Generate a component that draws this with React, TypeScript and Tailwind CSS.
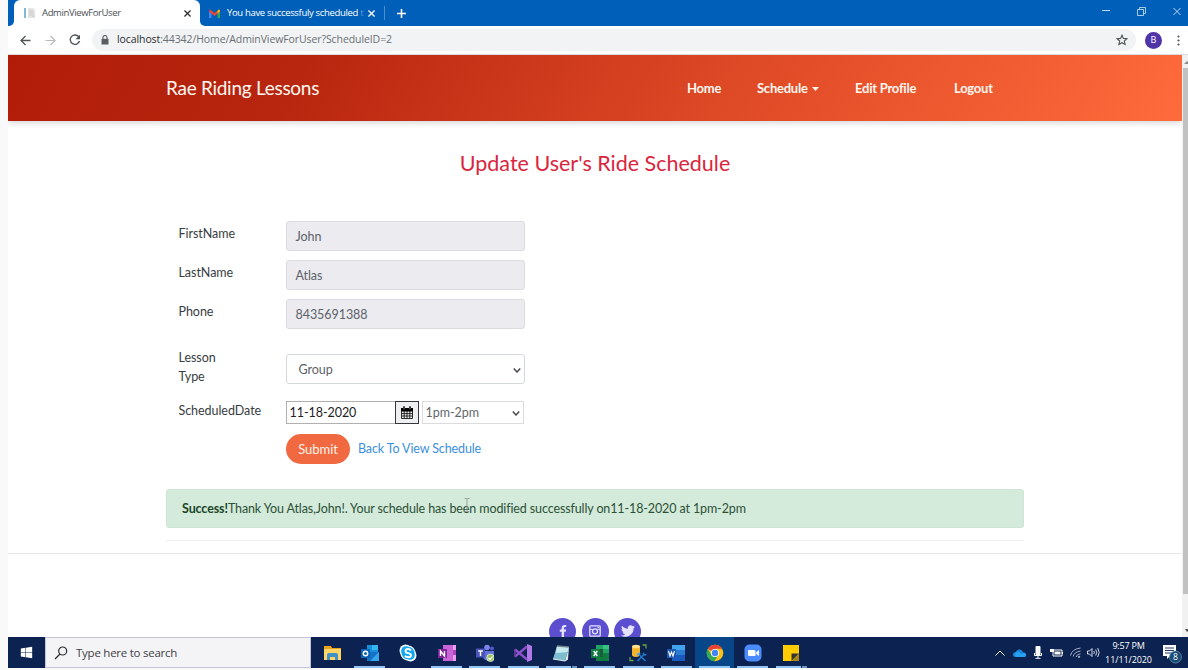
import React from "react";
import { FaFacebookF, FaTwitter, FaWindows } from "react-icons/fa";

const UI = "font-['Open_Sans','Noto_Sans',sans-serif]";

function TabBar() {
  return (
    <div className={`flex h-[26px] bg-[#005fb8] text-[9.5px] ${UI}`}>
      <div className="flex h-[26px] w-[6px] shrink-0 bg-white">
        <div className="w-full rounded-br-[5px] bg-[#005fb8]" />
      </div>
      <div className="flex h-[26px] w-[186px] shrink-0 items-center rounded-t-[6px] bg-white text-[#4b5056]">
        <svg className="ml-[9px] h-[12px] w-[13px] shrink-0" viewBox="0 0 13 12">
          <path d="M1 1h2v10H1z" fill="#82b9d6" />
          <path d="M5 1h5l2 2v8H5z" fill="#e4e4e4" />
          <path d="M6 4h4M6 6h5M6 8h3M9 9h3" stroke="#c2c2c2" strokeWidth=".8" />
        </svg>
        <span className="ml-[6px] w-[142px] tracking-[-0.38px]">AdminViewForUser</span>
        <Cross className="h-[7px] w-[7px] text-[#303030]" />
      </div>
      <div className="flex h-[26px] w-[6px] shrink-0 bg-white">
        <div className="w-full rounded-bl-[5px] bg-[#005fb8]" />
      </div>
      <div className="flex items-center text-white">
        <svg className="ml-[3px] h-[9px] w-[11px]" viewBox="0 0 11 9">
          <path d="M0 1.500V9h2.500V3.500z" fill="#4285f4" />
          <path d="M8.500 3.500V9H11V1.500z" fill="#34a853" />
          <path d="M0 1.500L1 .5l4.500 3.500L10 .5l1 1v1L5.500 7 0 2.500z" fill="#ea4335" />
          <path d="M8.500 1.700L10 .5l1 1v1L8.500 4.500z" fill="#fbbc04" />
        </svg>
        <span className="ml-[7px] w-[134px] whitespace-nowrap tracking-[-0.33px]">
          You have successfuly scheduled <span className="text-[#5b9bd5]">t</span>
        </span>
        <Cross className="ml-[7px] h-[7px] w-[7px]" />
        <div className="ml-[9px] h-[14px] w-px bg-[#4b8fd0]" />
        <svg className="ml-[12px] h-[9px] w-[9px]" viewBox="0 0 9 9">
          <path d="M4.500 0v9M0 4.500h9" stroke="white" strokeWidth="1.600" />
        </svg>
      </div>
      <div className="ml-auto flex gap-[27px] pr-[7px] pt-[7px] text-[#b9d9ee]">
        <svg className="h-[9px] w-[8px]" viewBox="0 0 8 9">
          <path d="M0 3.500h8" stroke="currentColor" />
        </svg>
        <svg className="h-[9px] w-[9px]" viewBox="0 0 9 9" fill="none" stroke="currentColor" strokeWidth=".9">
          <path d="M.5 2.500h6v6h-6zM2.500 2.500v-2h6v6h-2" />
        </svg>
        <Cross thin className="h-[9px] w-[8px]" />
      </div>
    </div>
  );
}

function Cross({ className, thin }: { className: string; thin?: boolean }) {
  return (
    <svg className={`shrink-0 ${className}`} viewBox="0 0 8 8">
      <path d="M.5.5l7 7M7.500.5l-7 7" stroke="currentColor" strokeWidth={thin ? 1 : 1.5} />
    </svg>
  );
}

function AddressBar() {
  return (
    <div className={`flex h-[29px] items-center border-b border-[#dddddf] bg-white ${UI}`}>
      <svg className="ml-[12px] h-[11px] w-[11px]" viewBox="0 0 11 11" fill="none" stroke="#50555a" strokeWidth="1.300">
        <path d="M10.500 5.500H1M5.500 1L1 5.500 5.500 10" />
      </svg>
      <svg className="ml-[14px] h-[11px] w-[11px]" viewBox="0 0 11 11" fill="none" stroke="#b8babd" strokeWidth="1.200">
        <path d="M.5 5.500H10M5.500 1L10 5.500 5.500 10" />
      </svg>
      <svg className="ml-[13px] h-[12px] w-[12px]" viewBox="0 0 12 12">
        <path d="M10 3.200A4.700 4.700 0 1 0 10.500 7" fill="none" stroke="#50555a" strokeWidth="1.400" />
        <path d="M11 .7v4.500H6.500z" fill="#50555a" />
      </svg>
      <div className="ml-[11px] flex h-[22px] w-[1044px] items-center rounded-full bg-[#f1f3f4]">
        <svg className="ml-[9px] h-[10px] w-[8px]" viewBox="0 0 8 10">
          <path d="M.5 3.800h7v5.700h-7z" fill="#5a5e62" />
          <path d="M2 4V2.500a2 2 0 0 1 4 0V4" fill="none" stroke="#5a5e62" strokeWidth="1.100" />
        </svg>
        <span className="ml-[8px] whitespace-nowrap text-[10.5px] tracking-[-0.09px] text-[#6b6f74]">
          <span className="text-[#2b2d30]">localhost</span>:44342/Home/AdminViewForUser?ScheduleID=2
        </span>
        <svg className="ml-auto mr-[8px] h-[12px] w-[12px]" viewBox="0 0 12 12">
          <path d="M6 1.200l1.400 3.200 3.500.3-2.600 2.300.8 3.500L6 8.700l-3.100 1.800.8-3.500L1.100 4.700l3.500-.3z" fill="none" stroke="#4e5357" strokeWidth="1.100" />
        </svg>
      </div>
      <div className="ml-[9px] flex h-[17px] w-[17px] items-center justify-center rounded-full bg-[#5134a8] text-[9px] text-white">B</div>
      <svg className="ml-[15px] h-[11px] w-[3px]" viewBox="0 0 3 11" fill="#505357">
        <circle cx="1.500" cy="1.500" r="1.100" />
        <circle cx="1.500" cy="5.500" r="1.100" />
        <circle cx="1.500" cy="9.500" r="1.100" />
      </svg>
    </div>
  );
}

function SiteNav() {
  return (
    <nav className="flex h-[66px] shrink-0 items-center bg-[linear-gradient(120deg,#b01c08_0%,#b8260f_25%,#e04b27_63%,#ff6b3b_100%)] pt-[1px] text-[13px] font-bold tracking-[-0.24px] text-[#fff7f0] shadow-[0_2px_6px_rgba(0,0,0,0.16)]">
      <div className="ml-[158px] w-[521px] pb-[1px] text-[19px] font-normal tracking-[-0.28px]">Rae Riding Lessons</div>
      <div className="w-[70px]">Home</div>
      <div className="flex w-[98px] items-center">
        Schedule
        <svg className="ml-[4px] h-[4px] w-[7px]" viewBox="0 0 7 4">
          <path d="M0 0h7L3.500 4z" fill="currentColor" />
        </svg>
      </div>
      <div className="w-[99px]">Edit Profile</div>
      <div>Logout</div>
    </nav>
  );
}

function Chevron() {
  return (
    <svg className="ml-auto h-[5px] w-[8px]" viewBox="0 0 8 5">
      <path d="M.8.6L4 4 7.200.6" fill="none" stroke="#48494b" strokeWidth="1.500" />
    </svg>
  );
}

function ReadonlyField({ label, value }: { label: string; value: string }) {
  return (
    <div className="flex h-[39px]">
      <div className="w-[107px] pt-[3px] leading-[19px]">{label}</div>
      <div className="flex h-[30px] w-[239px] items-center rounded-[3px] border border-[#dadce1] bg-[#ebebf0] px-[9px] pt-[2px] text-[#5d6268]">
        {value}
      </div>
    </div>
  );
}

function ScheduleForm() {
  return (
    <div className="ml-[170.5px] mt-[44px] flex flex-col text-[12.5px] tracking-[-0.05px] text-[#383d42]">
      <ReadonlyField label="FirstName" value="John" />
      <ReadonlyField label="LastName" value="Atlas" />
      <ReadonlyField label="Phone" value="8435691388" />
      <div className="mt-[16px] flex h-[47px]">
        <div className="-mt-[6px] w-[107px] leading-[19px]">
          Lesson
          <br />
          Type
        </div>
        <div className="flex h-[30px] w-[239px] items-center rounded-[3px] border border-[#d4d9df] pl-[12px] pr-[3px] pt-[2px] text-[#5d6268]">
          Group
          <Chevron />
        </div>
      </div>
      <div className="flex h-[33px]">
        <div className="w-[107px] leading-[19px]">ScheduledDate</div>
        <div className="flex h-[23px] w-[109px] items-center border border-r-0 border-[#b0b0b0] pl-[3px] pt-[2px] text-[#202225]">11-18-2020</div>
        <div className="flex h-[23px] w-[24px] items-center justify-center border border-[#34383c] bg-[#efeff1] text-black">
          <svg className="h-[13px] w-[12px]" viewBox="0 0 12 13">
            <path d="M.5 2.500h11v10H.5zM.5 5.200h11M.5 7.600h11M.5 10h11M3.200 5v7.500M6 5v7.500M8.800 5v7.500" fill="none" stroke="currentColor" strokeWidth=".8" />
            <path d="M0 2h12v3H0zM2 .5h2v3H2zM8 .5h2v3H8z" fill="currentColor" />
            <path d="M3 1.300v1.900M9 1.300v1.900" stroke="white" strokeWidth=".6" />
          </svg>
        </div>
        <div className="ml-[3px] flex h-[23px] w-[102px] items-center border border-[#dcdcdc] pl-[3px] pr-[3px] pt-[2px] text-[#63676b]">
          1pm-2pm
          <Chevron />
        </div>
      </div>
      <div className="ml-[107px] flex">
        <div className="ml-[0.5px] flex h-[30px] w-[64px] items-center justify-center rounded-full bg-[#f06940] pt-[2px] text-[13px] text-[#fff3ea]">Submit</div>
        <div className="ml-[8px] pt-[5px] leading-[19px] tracking-[-0.12px] text-[#3b8fe0]">Back To View Schedule</div>
      </div>
    </div>
  );
}

function SocialIcon({ children }: { children: React.ReactNode }) {
  return (
    <div className="flex h-[27px] w-[27px] items-center justify-center rounded-full bg-[#5b4fcf] text-[12px] text-[#e4e2ff]">
      {children}
    </div>
  );
}

function Page() {
  return (
    <div className="flex h-[582px] bg-white font-['Lato',sans-serif]">
      <div className="flex w-[1174px] flex-col overflow-hidden">
        <SiteNav />
        <h1 className="mt-[28px] text-center text-[21.5px] leading-[28px] text-[#d9263e]">Update User's Ride Schedule</h1>
        <ScheduleForm />
        <div className="relative ml-[158px] mt-[25px] flex h-[39px] w-[858px] shrink-0 items-center rounded-[3px] border border-[#cde6d4] bg-[#d4eadb] pl-[15px] pt-[2px] text-[12.5px] tracking-[-0.115px] text-[#2b5136]">
          <b className="text-[#194526]">Success!</b>
          <span>Thank You Atlas,John!. Your schedule has been modified successfully on11-18-2020 at 1pm-2pm</span>
          <svg className="absolute left-[297px] top-[8px] h-[14px] w-[6px]" viewBox="0 0 6 14">
            <path d="M.5.5h2l.5.500.5-.5h2M3 1v12M.5 13.500h2l.5-.5.5.5h2" fill="none" stroke="#8b8f8c" strokeWidth=".8" />
          </svg>
        </div>
        <div className="ml-[158px] mt-[12px] h-px w-[858px] shrink-0 bg-[#eeeeef]" />
        <div className="mt-[12px] h-px shrink-0 bg-[#e7e8ea]" />
        <div className="mt-[63.500px] flex shrink-0 justify-center gap-[5.500px]">
          <SocialIcon><FaFacebookF /></SocialIcon>
          <SocialIcon>
            <svg className="h-[12px] w-[12px]" viewBox="0 0 12 12" fill="none" stroke="currentColor">
              <rect x=".8" y=".8" width="10.400" height="10.400" rx="1" strokeWidth="1.300" />
              <circle cx="6" cy="6.300" r="2.500" strokeWidth="1.300" />
              <path d="M1 4.300h2.500M8.500 4.300H11M8.500 2.500h1.500" />
            </svg>
          </SocialIcon>
          <SocialIcon><FaTwitter className="h-[14px] w-[14px]" /></SocialIcon>
        </div>
      </div>
      <div className="flex w-[6px] flex-col items-center bg-[#f1f1f1]">
        <svg className="mt-[6px] h-[3px] w-[6px]" viewBox="0 0 6 3"><path d="M2 3l3-3 1 1v2z" fill="#8d8d8d" /></svg>
        <div className="mt-[4px] h-[526px] w-[5px] self-end bg-[#c1c1c1]" />
        <svg className="mb-[5px] mt-auto h-[3px] w-[6px]" viewBox="0 0 6 3"><path d="M3 0h3v2L5 3z" fill="#505050" /></svg>
      </div>
    </div>
  );
}

const explorer = (
  <>
    <path d="M1 2h7l1 2h9v12H1z" fill="#e8a51b" />
    <path d="M1 5h17v11H1z" fill="#ffd568" />
    <path d="M4 16v-5q0-2 2-2h7q2 0 2 2v5h-3v-3H7v3z" fill="#3f91c8" />
  </>
);
const outlook = (
  <>
    <path d="M6 1h11v9H6z" fill="#1790dc" />
    <path d="M11 1h6v5h-6z" fill="#32b5f0" />
    <path d="M6 8h12v9H6z" fill="#1670c5" />
    <path d="M18 8l-9 9h9z" fill="#35a6eb" />
    <path d="M0 5h9v9H0z" fill="#0b63b5" />
    <circle cx="4.500" cy="9.500" r="2.200" fill="none" stroke="white" strokeWidth="1.400" />
  </>
);
const skype = (
  <>
    <circle cx="6.500" cy="6.500" r="6" fill="#f4fbff" />
    <circle cx="11.500" cy="11.500" r="6" fill="#f4fbff" />
    <circle cx="9" cy="9" r="7.600" fill="#f4fbff" />
    <circle cx="7" cy="7" r="4.800" fill="#13a7ee" />
    <circle cx="11" cy="11" r="4.800" fill="#13a7ee" />
    <circle cx="9" cy="9" r="6.300" fill="#13a7ee" />
    <path d="M12 6.500Q11 5 9 5 6.500 5 6.500 7t2.500 2.100q3 .5 3 2.200 0 2-2.800 2Q7 13.300 6 11.800" fill="none" stroke="white" strokeWidth="1.900" />
  </>
);
const oneNote = (
  <>
    <path d="M5 1h13v16H5z" fill="#ca64d8" />
    <path d="M15 1h3v16h-3z" fill="#e6a0ee" />
    <path d="M15 6h3v5h-3z" fill="#ad45ba" />
    <path d="M0 5h9v9H0z" fill="#80249b" />
    <path d="M2.500 12V7l4 5V7" fill="none" stroke="white" strokeWidth="1.400" />
  </>
);
const teams = (
  <>
    <circle cx="11" cy="3.500" r="2.800" fill="#7b83eb" />
    <circle cx="16" cy="4.500" r="2" fill="#5059c9" />
    <path d="M7 7h12v6q-1 3-5 4-6 0-7-4z" fill="#6570d8" />
    <path d="M0 4.500h9v9H0z" fill="#4b53bc" />
    <path d="M2.200 7h4.600M4.500 7v5" stroke="white" strokeWidth="1.400" />
    <circle cx="14.500" cy="13.800" r="3.700" fill="#92c353" stroke="#f2f8e8" strokeWidth=".8" />
    <path d="M12.500 14l1.500 1.500 2.500-3" fill="none" stroke="white" strokeWidth="1.200" />
  </>
);
const visualStudio = (
  <>
    <path d="M13 0l5 2v14l-5 2z" fill="#b179e8" />
    <path d="M1 5.500L13 15.500M1 12.500L13 2.500" fill="none" stroke="#8b51c8" strokeWidth="2.400" />
    <path d="M1 5v8" stroke="#7440ad" strokeWidth="1.400" />
  </>
);
const notepad = (
  <>
    <path d="M5 2l12 1-4 14-12-2z" fill="#7cbdd0" />
    <path d="M5 2l12 1-1.500 5L4 9z" fill="#c7eaf0" />
    <path d="M17 3l-1 12-3 2z" fill="#e2e5e5" />
    <path d="M1 15l12 2 3-2" fill="none" stroke="#e1efef" />
    <path d="M5 2l12 1" stroke="#717f8a" strokeWidth="1.500" />
  </>
);
const excel = (
  <>
    <path d="M5 1h13v16H5z" fill="#21a366" />
    <path d="M5 9h13v8H5z" fill="#107c41" />
    <path d="M12 1h6v4h-6z" fill="#33c481" />
    <path d="M5 5h7v8H5z" fill="#185c37" />
    <path d="M0 5h9v9H0z" fill="#107c41" />
    <path d="M2.700 7l3.600 5M6.300 7l-3.600 5" stroke="white" strokeWidth="1.400" />
  </>
);
const sqlTool = (
  <>
    <path d="M3 2.500v9q3.500 3 8 0v-9z" fill="#f4b52c" />
    <ellipse cx="7" cy="2.500" rx="4" ry="1.800" fill="#ffe18a" />
    <path d="M13.500 1H17v3.500M1 13v3.500h3.500" fill="none" stroke="#66a53d" strokeWidth="1.300" />
    <path d="M8.500 17l7-7M9.500 10l7 7" stroke="#2078c9" strokeWidth="1.500" />
    <path d="M14 9l1.500 2 2-.5" fill="none" stroke="#2078c9" strokeWidth="1.500" />
    <path d="M8 11l3-2" stroke="#4aa4e8" strokeWidth="1.800" />
  </>
);
const word = (
  <>
    <path d="M5 1h13v16H5z" fill="#2b7cd3" />
    <path d="M5 1h13v5H5z" fill="#41a5ee" />
    <path d="M5 11h13v6H5z" fill="#185abd" />
    <path d="M0 5h9v9H0z" fill="#1b58b5" />
    <path d="M1.500 7l1.500 5 1.500-4L6 12l1.500-5" fill="none" stroke="white" strokeWidth="1.100" />
  </>
);
const chrome = (
  <>
    <circle cx="9" cy="9" r="8.300" fill="#fbc116" />
    <path d="M9 9L1.800 4.800A8.300 8.300 0 0 1 16.200 4.800H9z" fill="#e94335" />
    <path d="M1.800 4.800A8.300 8.300 0 0 0 8.300 17.300L12.500 11 9 9 5.500 11z" fill="#34a853" />
    <circle cx="9" cy="9" r="4.100" fill="white" />
    <circle cx="9" cy="9" r="3.200" fill="#4285f4" />
  </>
);
const zoomApp = (
  <>
    <rect x=".5" y=".5" width="17" height="17" rx="5" fill="#4a8cff" />
    <path d="M4 6h6q1.500 0 1.500 1.500V12H5.500Q4 12 4 10.500zM12.200 8.200L15 6v6l-2.800-2z" fill="white" />
  </>
);
const notes = (
  <>
    <path d="M1 1h16v16H1z" fill="#ffcc00" />
    <path d="M9.500 9.500H17L9.500 17z" fill="#343434" />
    <path d="M17 9.500V17H9.500z" fill="#a8851a" />
  </>
);

const apps = [
  { icon: explorer, open: false },
  { icon: outlook, open: true },
  { icon: skype, open: false },
  { icon: oneNote, open: true },
  { icon: teams, open: true },
  { icon: visualStudio, open: true },
  { icon: notepad, open: true, stacked: true },
  { icon: excel, open: true },
  { icon: sqlTool, open: true },
  { icon: word, open: true },
  { icon: chrome, open: true, active: true },
  { icon: zoomApp, open: true },
  { icon: notes, open: true, stacked: true },
];

function Taskbar() {
  return (
    <div className={`flex h-[31px] items-center bg-[#0c2250] text-white ${UI}`}>
      <div className="flex w-[37px] justify-center">
        <FaWindows className="h-[13px] w-[13px]" />
      </div>
      <div className="flex h-[31px] w-[266px] items-center border border-[#c4c4d4] bg-[#f4f4f7] text-[11.5px] text-[#404044]">
        <svg className="ml-[8px] h-[14px] w-[14px]" viewBox="0 0 14 14">
          <circle cx="8.700" cy="5" r="4" fill="none" stroke="#2e2e32" strokeWidth="1.200" />
          <path d="M6 8L1 13" stroke="#2e2e32" strokeWidth="1.200" />
        </svg>
        <span className="ml-[8px] tracking-[-0.25px]">Type here to search</span>
      </div>
      <div className="ml-[1.500px] flex">
        {apps.map((app, i) => (
          <div key={i} className={`flex h-[31px] w-[38.300px] flex-col items-center ${app.active ? "bg-[#074689]" : ""}`}>
            <svg className="mt-[7px] h-[18px] w-[18px]" viewBox="0 0 18 18">{app.icon}</svg>
            {app.open && (
              <div className="mt-auto flex h-[2px] w-[31px] bg-[#92c4f3]">
                {app.stacked && <div className="ml-auto w-[6px] border-l border-[#0c2250] bg-[#6e93bd]" />}
              </div>
            )}
          </div>
        ))}
      </div>
      <div className="ml-auto flex items-center">
        <svg className="h-[6px] w-[10px]" viewBox="0 0 10 6"><path d="M.5 5.500L5 1l4.500 4.500" fill="none" stroke="white" /></svg>
        <svg className="ml-[8px] h-[8px] w-[13px]" viewBox="0 0 13 8">
          <path d="M3 8Q0 8 0 5.500T3 3Q4 0 7 0.500 9.500 1 10 3.500 13 3.500 13 6 13 8 11 8z" fill="#1688e0" />
          <path d="M3 3Q6 2 8 5l3-1.500Q13 4 13 6T11 8H3Q1 7 3 3" fill="#28a0f0" />
        </svg>
        <svg className="ml-[8px] h-[13px] w-[8px]" viewBox="0 0 8 13">
          <rect x="1.500" y="0" width="5" height="9" rx="1" fill="white" />
          <path d="M.5 7v2.500h7V7M4 9.500V12M1.500 12.300h5" fill="none" stroke="white" />
        </svg>
        <svg className="ml-[8px] h-[9px] w-[13px]" viewBox="0 0 13 9">
          <path d="M3 2h9v6H3z" fill="none" stroke="white" />
          <path d="M4.500 3.500h6v3h-6zM12 4h1v2h-1zM0 1h4v3H0z" fill="white" />
        </svg>
        <svg className="ml-[7px] h-[11px] w-[11px]" viewBox="0 0 11 11" fill="none" stroke="#a2afc7">
          <path d="M.5 8.500Q2 2 10.500 1M3.200 9.500q1-4.500 7.300-5.500M6 10Q7 7 10.500 6.800" />
          <circle cx="9" cy="9.800" r=".7" fill="white" />
        </svg>
        <svg className="ml-[6px] h-[11px] w-[13px]" viewBox="0 0 13 11" fill="none" stroke="#e4eaf3" strokeWidth=".9">
          <path d="M.5 4h2L5 1.500v8L2.500 7h-2zM6.800 4q1 1.500 0 3M8.700 2.500q2 3 0 6M10.700 1q3 4.500 0 9" />
        </svg>
        <div className="ml-[5px] w-[47px] whitespace-nowrap text-center text-[9px] leading-[14px]">
          <div className="tracking-[-0.2px]">9:57 PM</div>
          <div className="tracking-[-0.1px]">11/11/2020</div>
        </div>
        <svg className="ml-[11px] mr-[6px] mt-[2px] h-[20px] w-[19px]" viewBox="0 0 19 20">
          <path d="M0 1h13v11H7l-3 3v-3H0z" fill="white" />
          <path d="M2 4h9M2 6.500h9M2 9h7" stroke="#20365f" />
          <circle cx="12.500" cy="13" r="6" fill="#174b75" stroke="#6d9aba" strokeWidth=".7" />
          <text x="12.500" y="16" textAnchor="middle" fontSize="8.500" fill="white">8</text>
        </svg>
      </div>
    </div>
  );
}

export default function App() {
  return (
    <div className="h-[670px] w-[1188px] overflow-hidden bg-[#f9f9f9] pl-[8px]">
      <TabBar />
      <AddressBar />
      <Page />
      <Taskbar />
    </div>
  );
}
